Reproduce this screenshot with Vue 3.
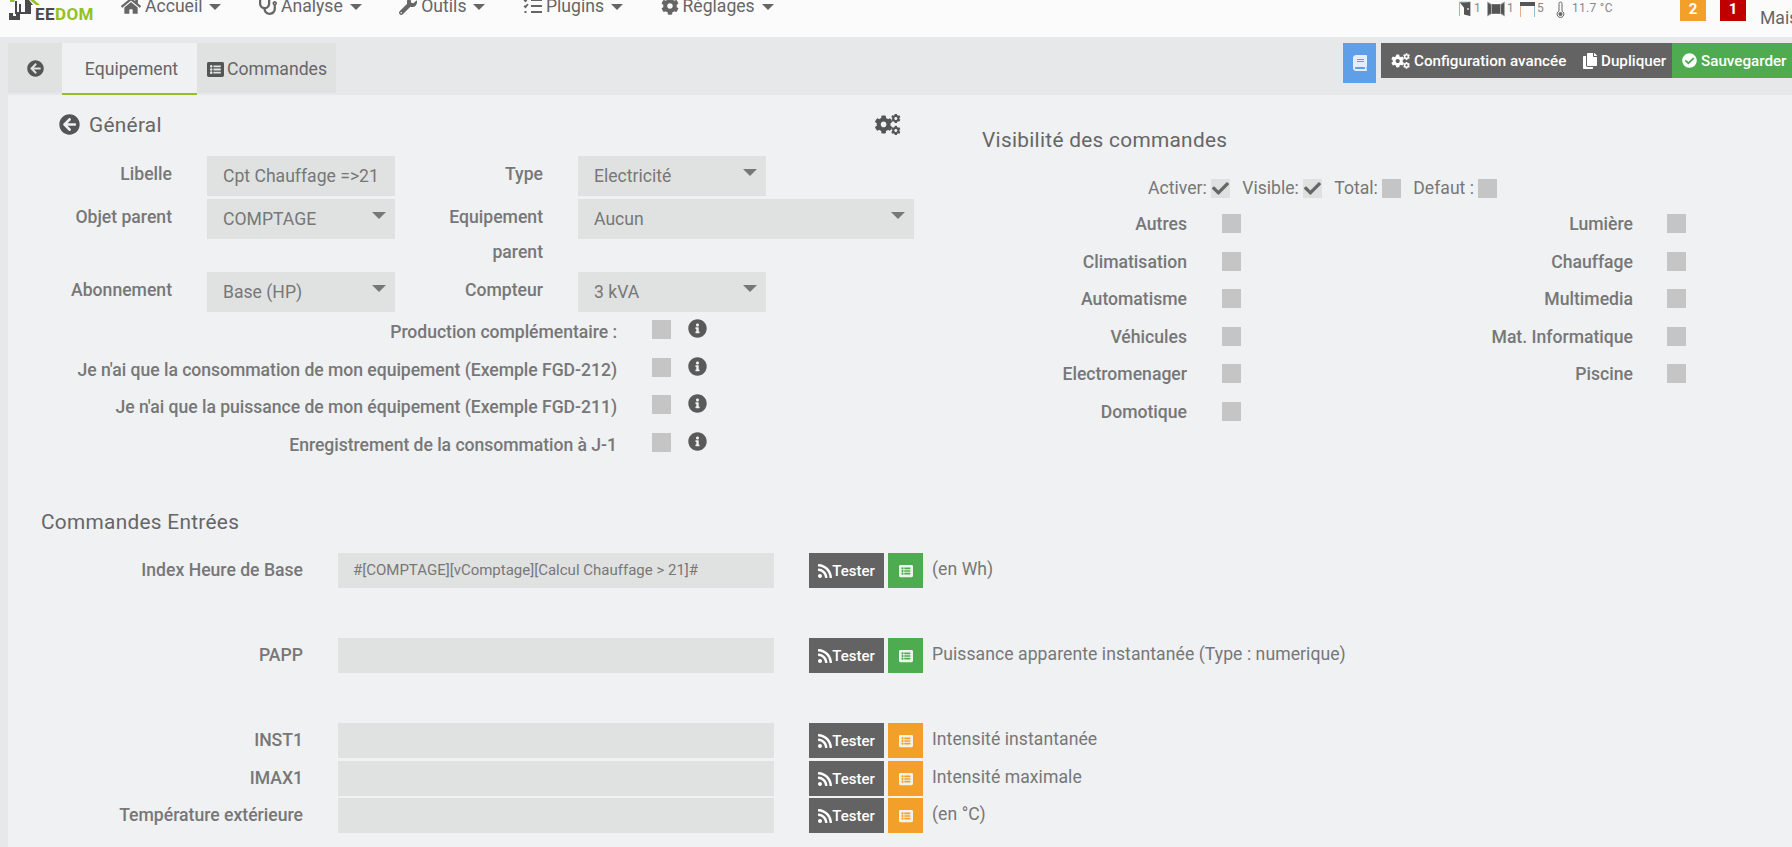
<script setup>
const p = {
  home: 'M280.37 148.26L96 300.11V464a16 16 0 0 0 16 16l112.06-.29a16 16 0 0 0 15.92-16V368a16 16 0 0 1 16-16h64a16 16 0 0 1 16 16v95.64a16 16 0 0 0 16 16.05L464 480a16 16 0 0 0 16-16V300L295.67 148.26a12.19 12.19 0 0 0-15.3 0zM571.6 251.47L488 182.56V44.05a12 12 0 0 0-12-12h-56a12 12 0 0 0-12 12v72.61L318.47 43a48 48 0 0 0-61 0L4.34 251.47a12 12 0 0 0-1.6 16.9l25.5 31A12 12 0 0 0 45.15 301l235.22-193.74a12.19 12.19 0 0 1 15.3 0L530.9 301a12 12 0 0 0 16.9-1.6l25.5-31a12 12 0 0 0-1.7-16.93z',
  steth: 'M447.1 112c-34.2.5-62.3 28.4-63 62.6-.5 24.3 12.5 45.6 32 56.8V344c0 57.3-50.2 104-112 104-60 0-109.2-44.1-111.9-99.2C265 333.8 320 269.2 320 192V36.6c0-11.4-8.1-21.3-19.3-23.5L237.8.5c-13-2.6-25.6 5.8-28.2 18.8L206.4 35c-2.6 13 5.8 25.6 18.8 28.2l30.7 6.1v121.4c0 52.9-42.2 96.7-95.1 97.2-53.4.5-96.9-42.7-96.9-96V69.4l30.7-6.1c13-2.6 21.4-15.2 18.8-28.2l-3.1-15.7C107.7 6.4 95.1-2 82.1.6L19.3 13C8.1 15.3 0 25.1 0 36.6V192c0 77.3 55.1 142 128.1 156.8C130.7 439.2 208.6 512 304 512c97 0 176-75.4 176-168V231.4c19.1-11.1 32-31.7 32-55.4 0-35.7-29.2-64.5-64.9-64zm.9 80c-8.8 0-16-7.2-16-16s7.2-16 16-16 16 7.2 16 16-7.2 16-16 16z',
  wrench: 'M507.73 109.1c-2.24-9.03-13.54-12.09-20.12-5.51l-74.36 74.36-67.88-11.31-11.31-67.88 74.36-74.36c6.62-6.62 3.43-17.9-5.66-20.16-47.38-11.74-99.55.91-136.58 37.93-39.64 39.64-50.55 97.1-34.05 147.2L18.74 402.76c-24.99 24.99-24.99 65.51 0 90.5 24.99 24.99 65.51 24.99 90.5 0l213.21-213.21c50.12 16.71 107.47 5.68 147.37-34.22 37.07-37.07 49.7-89.32 37.91-136.73zM64 472c-13.25 0-24-10.75-24-24 0-13.26 10.75-24 24-24s24 10.74 24 24c0 13.25-10.75 24-24 24z',
  cog: 'M487.4 315.7l-42.6-24.6c4.3-23.2 4.3-47 0-70.2l42.6-24.6c4.9-2.8 7.1-8.6 5.5-14-11.1-35.6-30-67.8-54.7-94.6-3.8-4.1-10-5.1-14.8-2.3L380.8 110c-17.9-15.4-38.5-27.3-60.8-35.1V25.8c0-5.6-3.9-10.5-9.4-11.7-36.7-8.2-74.3-7.8-109.2 0-5.5 1.2-9.4 6.1-9.4 11.7V75c-22.2 7.9-42.8 19.8-60.8 35.1L88.7 85.5c-4.9-2.8-11-1.9-14.8 2.3-24.7 26.7-43.6 58.9-54.7 94.6-1.7 5.4.6 11.2 5.5 14L67.3 221c-4.3 23.2-4.3 47 0 70.2l-42.6 24.6c-4.9 2.8-7.1 8.6-5.5 14 11.1 35.6 30 67.8 54.7 94.6 3.8 4.1 10 5.1 14.8 2.3l42.6-24.6c17.9 15.4 38.5 27.3 60.8 35.1v49.2c0 5.6 3.9 10.5 9.4 11.7 36.7 8.2 74.3 7.8 109.2 0 5.5-1.2 9.4-6.1 9.4-11.7v-49.2c22.2-7.9 42.8-19.8 60.8-35.1l42.6 24.6c4.9 2.8 11 1.9 14.8-2.3 24.7-26.7 43.6-58.9 54.7-94.6 1.5-5.5-.7-11.3-5.6-14.1zM256 336c-44.1 0-80-35.9-80-80s35.9-80 80-80 80 35.9 80 80-35.9 80-80 80z',
  back: 'M256 504C119 504 8 393 8 256S119 8 256 8s248 111 248 248-111 248-248 248zm28.9-143.6L209.4 288H392c13.3 0 24-10.7 24-24v-16c0-13.3-10.7-24-24-24H209.4l75.5-72.4c9.7-9.3 9.9-24.8.4-34.3l-11-10.9c-9.4-9.4-24.6-9.4-33.9 0L107.7 239c-9.4 9.4-9.4 24.6 0 33.9l132.7 132.7c9.4 9.4 24.6 9.4 33.9 0l11-10.9c9.5-9.5 9.3-25-.4-34.3z',
  ok: 'M504 256c0 136.967-111.033 248-248 248S8 392.967 8 256 119.033 8 256 8s248 111.033 248 248zM227.314 387.314l184-184c6.248-6.248 6.248-16.379 0-22.627l-22.627-22.627c-6.248-6.249-16.379-6.249-22.628 0L216 308.118l-70.059-70.059c-6.248-6.248-16.379-6.248-22.628 0l-22.627 22.627c-6.248 6.248-6.248 16.379 0 22.627l104 104c6.249 6.249 16.379 6.249 22.628.001z',
  info: 'M256 8C119.043 8 8 119.083 8 256c0 136.997 111.043 248 248 248s248-111.003 248-248C504 119.083 392.957 8 256 8zm0 110c23.196 0 42 18.804 42 42s-18.804 42-42 42-42-18.804-42-42 18.804-42 42-42zm56 254c0 6.627-5.373 12-12 12h-88c-6.627 0-12-5.373-12-12v-24c0-6.627 5.373-12 12-12h12v-64h-12c-6.627 0-12-5.373-12-12v-24c0-6.627 5.373-12 12-12h64c6.627 0 12 5.373 12 12v100h12c6.627 0 12 5.373 12 12v24z',
  check: 'M173.898 439.404l-166.4-166.4c-9.997-9.997-9.997-26.206 0-36.204l36.203-36.204c9.997-9.998 26.207-9.998 36.204 0L192 312.69 432.095 72.596c9.997-9.997 26.207-9.997 36.204 0l36.203 36.204c9.997 9.997 9.997 26.206 0 36.204l-294.4 294.401c-9.998 9.997-26.207 9.997-36.204-.001z',
  rss: 'M128.081 415.959c0 35.369-28.672 64.041-64.041 64.041S0 451.328 0 415.959s28.672-64.041 64.041-64.041 64.04 28.673 64.04 64.041zm175.66 47.25c-8.354-154.6-132.185-278.587-286.95-286.95C7.656 175.765 0 183.105 0 192.253v48.069c0 8.415 6.49 15.472 14.887 16.018 111.832 7.284 201.473 96.702 208.772 208.772.547 8.397 7.604 14.887 16.018 14.887h48.069c9.149.001 16.489-7.655 15.995-16.79zm144.249.288C439.596 229.677 251.465 40.445 16.503 32.01 7.473 31.686 0 38.981 0 48.016v48.068c0 8.625 6.835 15.645 15.453 15.999 191.179 7.839 344.627 161.316 352.465 352.465.353 8.618 7.373 15.453 15.999 15.453h48.068c9.034-.001 16.329-7.474 16.005-16.504z',
  list: 'M464 480H48c-26.51 0-48-21.49-48-48V80c0-26.51 21.49-48 48-48h416c26.51 0 48 21.49 48 48v352c0 26.51-21.49 48-48 48zM128 120c-22.091 0-40 17.909-40 40s17.909 40 40 40 40-17.909 40-40-17.909-40-40-40zm0 96c-22.091 0-40 17.909-40 40s17.909 40 40 40 40-17.909 40-40-17.909-40-40-40zm0 96c-22.091 0-40 17.909-40 40s17.909 40 40 40 40-17.909 40-40-17.909-40-40-40zm288-136v-32c0-6.627-5.373-12-12-12H204c-6.627 0-12 5.373-12 12v32c0 6.627 5.373 12 12 12h200c6.627 0 12-5.373 12-12zm0 96v-32c0-6.627-5.373-12-12-12H204c-6.627 0-12 5.373-12 12v32c0 6.627 5.373 12 12 12h200c6.627 0 12-5.373 12-12zm0 96v-32c0-6.627-5.373-12-12-12H204c-6.627 0-12 5.373-12 12v32c0 6.627 5.373 12 12 12h200c6.627 0 12-5.373 12-12z',
  book: 'M448 360V24c0-13.3-10.7-24-24-24H96C43 0 0 43 0 96v320c0 53 43 96 96 96h328c13.3 0 24-10.7 24-24v-16c0-7.5-3.5-14.3-8.9-18.7-4.2-15.4-4.2-59.3 0-74.7 5.4-4.3 8.9-11.1 8.9-18.6zM128 134c0-3.3 2.7-6 6-6h212c3.3 0 6 2.7 6 6v20c0 3.3-2.7 6-6 6H134c-3.3 0-6-2.7-6-6v-20zm0 64c0-3.3 2.7-6 6-6h212c3.3 0 6 2.7 6 6v20c0 3.3-2.7 6-6 6H134c-3.3 0-6-2.7-6-6v-20zm253.4 250H96c-17.7 0-32-14.3-32-32 0-17.6 14.4-32 32-32h285.4c-1.9 17.1-1.9 46.9 0 64z',
  copy: 'M320 448v40c0 13.255-10.745 24-24 24H24c-13.255 0-24-10.745-24-24V120c0-13.255 10.745-24 24-24h72v296c0 30.879 25.121 56 56 56h168zm0-344V0H152c-13.255 0-24 10.745-24 24v368c0 13.255 10.745 24 24 24h272c13.255 0 24-10.745 24-24V128H344c-13.2 0-24-10.8-24-24zm120.971-31.029L375.029 7.029A24 24 0 0 0 358.059 0H352v96h96v-6.059a24 24 0 0 0-7.029-16.97z'
}
const checks = [
  'Production complémentaire :',
  "Je n'ai que la consommation de mon equipement (Exemple FGD-212)",
  "Je n'ai que la puissance de mon équipement (Exemple FGD-211)",
  'Enregistrement de la consommation à J-1'
]
const cats = [
  ['Autres', 'Lumière'],
  ['Climatisation', 'Chauffage'],
  ['Automatisme', 'Multimedia'],
  ['Véhicules', 'Mat. Informatique'],
  ['Electromenager', 'Piscine'],
  ['Domotique', '']
]
const cmds = [
  { label: 'Index Heure de Base', value: '#[COMPTAGE][vComptage][Calcul Chauffage > 21]#', desc: '(en Wh)', color: 'green', cls: '' },
  { label: 'PAPP', value: '', desc: 'Puissance apparente instantanée (Type : numerique)', color: 'green', cls: 'far' },
  { label: 'INST1', value: '', desc: 'Intensité instantanée', color: 'orange', cls: 'far' },
  { label: 'IMAX1', value: '', desc: 'Intensité maximale', color: 'orange', cls: 'near' },
  { label: 'Température extérieure', value: '', desc: '(en °C)', color: 'orange', cls: 'tight' }
]
</script>

<template>
  <div class="page">
    <header class="nav">
      <div class="logo">
        <svg class="logo-mark" width="36" height="22" viewBox="0 0 36 22">
          <path d="M5 0h5l-1 2H5z" fill="#94c11f" />
          <path d="M25 0h4l6 5h-4z" fill="#94c11f" />
          <path d="M20 0h4l4 5h-2v9H15v6H4v-7h4v3h3v-2h-1V1h2v11h2V4h2v8h4V3z" fill="#4a4a4d" />
        </svg>
        <span class="logo-text"><span class="ee">EE</span><span class="dom">DOM</span></span>
      </div>
      <nav class="menu">
        <a class="item">
          <svg class="nav-ico" width="20" height="18" viewBox="0 0 576 512"><path :d="p.home" /></svg>
          Accueil<i class="caret"></i>
        </a>
        <a class="item">
          <svg class="nav-ico" width="18" height="18" viewBox="0 0 512 512"><path :d="p.steth" /></svg>
          Analyse<i class="caret"></i>
        </a>
        <a class="item">
          <svg class="nav-ico" width="18" height="18" viewBox="0 0 512 512"><path :d="p.wrench" /></svg>
          Outils<i class="caret"></i>
        </a>
        <a class="item">
          <svg class="nav-ico" width="19" height="18" viewBox="0 0 19 18" stroke="#666" stroke-width="2" fill="none">
            <path d="M8 3h11M8 9h11M8 15h11" /><path d="M1 3l1.500 1.500L5 1M1 9l1.500 1.500L5 7" stroke-width="1.400" /><path d="M1.500 15h2" />
          </svg>
          Plugins<i class="caret"></i>
        </a>
        <a class="item">
          <svg class="nav-ico" width="18" height="18" viewBox="0 0 512 512"><path :d="p.cog" /></svg>
          Réglages<i class="caret"></i>
        </a>
      </nav>
      <div class="status">
        <svg width="13" height="16" viewBox="0 0 13 16" fill="none">
          <path d="M.5 1h11v14" stroke="#bbb" /><path d="M.5 1v14" stroke="#e8a070" /><path d="M5 2.500l6-1.500v14l-6-1.500z" fill="#555" /><circle cx="9" cy="8" r="1" fill="#ddd" />
        </svg>
        <span class="n1">1</span>
        <svg class="s-win" width="18" height="16" viewBox="0 0 18 16" fill="none">
          <path d="M4.500 3.500h9v9h-9z" stroke="#777" /><path d="M.5 1l4 2.500v9l-4 2.500zM17.500 1l-4 2.500v9l4 2.500z" stroke="#aaa" />
        </svg>
        <span class="n2">1</span>
        <svg class="s-shut" width="15" height="16" viewBox="0 0 15 16" fill="none">
          <path d="M0 1h15v4H0z" fill="#555" /><path d="M.5 5v11" stroke="#e8b08a" /><path d="M14.500 5v11" stroke="#9bc" />
        </svg>
        <span class="n3">5</span>
        <svg class="s-th" width="9" height="17" viewBox="0 0 9 17" fill="none" stroke="#666">
          <path d="M3 2.500a1.500 1.500 0 0 1 3 0v7.500a3.400 3.400 0 1 1-3 0z" fill="#fbfbfb" /><circle cx="4.500" cy="13" r="1.600" fill="#666" />
        </svg>
        <span class="temp">11.7 °C</span>
      </div>
      <span class="badge orange">2</span>
      <span class="badge red">1</span>
      <span class="home-name">Maison</span>
    </header>

    <div class="tabbar">
      <a class="tab back">
        <svg width="17" height="17" viewBox="0 0 512 512"><path :d="p.back" /></svg>
      </a>
      <a class="tab active">Equipement</a>
      <a class="tab cmd">
        <svg width="17" height="17" viewBox="0 0 512 512"><path :d="p.list" /></svg>Commandes
      </a>
      <div class="actions">
        <a class="btn-doc">
          <svg width="14" height="16" viewBox="0 0 448 512"><path :d="p.book" /></svg>
        </a>
        <a class="btn dark cfg">
          <svg width="19" height="16" viewBox="0 0 640 512">
            <g transform="translate(0 30) scale(.88)"><path :d="p.cog" /></g>
            <g transform="translate(405 -10) scale(.46)"><path :d="p.cog" /></g>
            <g transform="translate(405 285) scale(.46)"><path :d="p.cog" /></g>
          </svg>
          Configuration avancée
        </a>
        <a class="btn dark dup">
          <svg width="14" height="16" viewBox="0 0 448 512"><path :d="p.copy" /></svg>
          Dupliquer
        </a>
        <a class="btn save">
          <svg width="15" height="15" viewBox="0 0 512 512"><path :d="p.ok" /></svg>
          Sauvegarder
        </a>
      </div>
    </div>

    <main class="main">
      <div class="cols">
        <section class="left">
          <div class="gen-head">
            <div class="gen-title">
              <svg width="21" height="21" viewBox="0 0 512 512"><path :d="p.back" /></svg>
              <span>Général</span>
            </div>
            <svg width="27" height="21" viewBox="0 0 640 512">
              <g transform="translate(0 30) scale(.88)"><path :d="p.cog" /></g>
              <g transform="translate(405 -10) scale(.46)"><path :d="p.cog" /></g>
              <g transform="translate(405 285) scale(.46)"><path :d="p.cog" /></g>
            </svg>
          </div>

          <div class="frow">
            <label class="l1">Libelle</label>
            <div class="field w188">Cpt Chauffage =&gt;21</div>
            <label class="l2">Type</label>
            <div class="field select w188">Electricité</div>
          </div>
          <div class="frow">
            <label class="l1">Objet parent</label>
            <div class="field select w188">COMPTAGE</div>
            <label class="l2">Equipement<br />parent</label>
            <div class="field select w336">Aucun</div>
          </div>
          <div class="frow">
            <label class="l1">Abonnement</label>
            <div class="field select w188">Base (HP)</div>
            <label class="l2">Compteur</label>
            <div class="field select w188">3 kVA</div>
          </div>

          <div class="checks">
            <div v-for="c in checks" :key="c" class="crow">
              <label>{{ c }}</label>
              <i class="box"></i>
              <svg class="info" width="19" height="19" viewBox="0 0 512 512"><path :d="p.info" /></svg>
            </div>
          </div>
        </section>

        <section class="right">
          <h3 class="vis-title">Visibilité des commandes</h3>
          <div class="vis-line">
            <span>Activer:</span><i class="box on"><svg width="17" height="17" viewBox="0 0 512 512"><path :d="p.check" /></svg></i>
            <span>Visible:</span><i class="box on"><svg width="17" height="17" viewBox="0 0 512 512"><path :d="p.check" /></svg></i>
            <span>Total:</span><i class="box"></i>
            <span>Defaut :</span><i class="box"></i>
          </div>
          <div v-for="r in cats" :key="r[0]" class="cat">
            <label class="c1">{{ r[0] }}</label><i class="box"></i>
            <template v-if="r[1]">
              <label class="c2">{{ r[1] }}</label><i class="box"></i>
            </template>
          </div>
        </section>
      </div>

      <h3 class="cmd-title">Commandes Entrées</h3>
      <div v-for="c in cmds" :key="c.label" class="cmd-row" :class="c.cls">
        <label class="cmd-label">{{ c.label }}</label>
        <div class="cmd-input">{{ c.value }}</div>
        <a class="tester">
          <svg width="14" height="16" viewBox="0 0 448 512"><path :d="p.rss" /></svg><span>Tester</span>
        </a>
        <a class="hist" :class="c.color">
          <svg width="14" height="14" viewBox="0 0 512 512"><path :d="p.list" /></svg>
        </a>
        <span class="desc">{{ c.desc }}</span>
      </div>
    </main>
  </div>
</template>

<style>
html, body { margin: 0; background: #e7e8ea; }
</style>

<style scoped>
.page {
  height: 847px;
  overflow: hidden;
  display: flex;
  flex-direction: column;
  background: #e7e8ea;
  font-family: Roboto, "Liberation Sans", sans-serif;
  font-size: 17.6px;
  color: #777;
}
svg { display: block; flex: none; fill: #555; }

.nav {
  height: 37px;
  flex: none;
  background: #fbfbfb;
  display: flex;
  align-items: flex-start;
  overflow: hidden;
  white-space: nowrap;
}
.logo { width: 121px; flex: none; display: flex; align-items: flex-start; padding-left: 5px; box-sizing: border-box; position: relative; }
.logo-text { position: absolute; left: 35px; top: 4px; font-size: 17px; font-weight: 700; letter-spacing: 0.4px; line-height: 20px; }
.ee { color: #4a4a4d; }
.dom { color: #94c11f; }
.menu { display: flex; gap: 37.5px; margin-top: -4px; color: #666; }
.item { display: flex; align-items: center; height: 20px; line-height: 20px; font-size: 17.6px; color: #666; }
.nav-ico { fill: #666; margin-right: 4px; margin-top: -1px; }
.caret { width: 0; height: 0; border-left: 6px solid transparent; border-right: 6px solid transparent; border-top: 6px solid #666; margin-left: 7px; margin-top: 2px; }

.status { position: absolute; left: 1459px; top: 1px; display: flex; align-items: flex-start; font-size: 12px; line-height: 14px; color: #888; }
.n1 { margin-left: 2px; width: 13px; }
.n2 { margin-left: 2px; width: 13px; }
.n3 { margin-left: 2px; width: 19px; }
.temp { margin-left: 7px; letter-spacing: 0.3px; }
.badge { position: absolute; top: 0; width: 26px; height: 21px; text-align: center; color: #fff; font-size: 15px; font-weight: 700; line-height: 18px; }
.badge.orange { left: 1680px; background: #f2a02a; }
.badge.red { left: 1720px; background: #c00000; }
.home-name { position: absolute; left: 1760px; top: 8px; font-size: 17.6px; line-height: 20px; color: #666; }

.tabbar { flex: none; height: 58px; padding: 6px 0 0 8px; box-sizing: border-box; display: flex; align-items: flex-start; }
.tab { height: 50px; background: #e0e2e2; display: flex; align-items: center; box-sizing: border-box; font-size: 17.6px; color: #666; padding-top: 2px; }
.tab.back { width: 54px; justify-content: center; padding-top: 0; }
.tab.active { width: 135px; justify-content: center; background: #eff1f3; border-bottom: 2px solid #94c11f; height: 52px; padding-left: 4px; }
.tab.cmd { width: 139px; justify-content: center; gap: 3px; padding-left: 1px; }
.actions { margin-left: auto; display: flex; align-items: flex-start; }
.btn-doc { width: 33px; height: 40px; background: #5f9fe8; display: flex; align-items: center; justify-content: center; margin-right: 5px; }
.btn-doc svg { fill: #e4edf9; }
.btn { height: 35px; display: flex; align-items: center; color: #fff; font-size: 15.2px; font-weight: 500; box-sizing: border-box; gap: 4px; white-space: nowrap; }
.btn svg { fill: #fff; }
.dark { background: #636363; }
.cfg { width: 191px; padding-left: 10px; }
.dup { width: 100px; padding-left: 11px; }
.save { width: 120px; background: #4fab50; padding-left: 10px; }

.main { flex: 1; margin-left: 8px; background: #eff1f3; }
.cols { display: flex; }
.left { width: 974px; flex: none; }
.gen-head { width: 893px; height: 21px; margin-top: 19px; margin-bottom: 21px; padding-left: 51px; box-sizing: border-box; display: flex; justify-content: space-between; align-items: center; }
.gen-title { display: flex; align-items: center; gap: 9px; font-size: 20.8px; letter-spacing: 0.3px; color: #666; }

.frow { display: flex; align-items: flex-start; margin-bottom: 3px; }
.frow label { line-height: 35px; font-weight: 500; color: #777; text-align: right; box-sizing: border-box; position: relative; top: 1px; }
.l1 { width: 164px; margin-right: 35px; }
.l2 { width: 148px; margin-right: 35px; }
.field { height: 40px; line-height: 40px; background: #e0e2e1; padding-left: 16px; box-sizing: border-box; position: relative; color: #777; }
.w188 { width: 188px; }
.w336 { width: 336px; }
.select::after { content: ""; position: absolute; right: 9px; top: 13px; border-left: 7.5px solid transparent; border-right: 7.5px solid transparent; border-top: 7px solid #777; }

.crow { display: flex; align-items: flex-start; height: 37.5px; }
.crow label { width: 609px; text-align: right; margin-right: 35px; line-height: 35px; font-weight: 500; letter-spacing: -0.035px; }
.box { width: 19px; height: 19px; background: #c5c5c5; flex: none; display: flex; align-items: center; justify-content: center; }
.box.on { background: #dfe1e0; }
.box.on svg { fill: #666; }
.crow .box { margin-top: 5px; }
.info { margin-left: 17px; margin-top: 4px; fill: #5a5a5a; }

.vis-title { margin: 33px 0 18px; font-size: 20.8px; line-height: 24px; font-weight: 400; letter-spacing: 0.3px; color: #666; }
.vis-line { display: flex; align-items: center; height: 36px; padding-left: 166px; }
.vis-line span { margin-right: 4px; }
.vis-line .box { margin-right: 12.5px; }
.cat { display: flex; align-items: flex-start; height: 37.5px; }
.cat label { line-height: 36px; text-align: right; font-weight: 500; }
.cat .box { margin-top: 8px; }
.c1 { width: 205px; margin-right: 35px; }
.c2 { width: 392px; margin-right: 34px; }

.cmd-title { margin: 45px 0 19px 33px; font-size: 20.8px; line-height: 24px; font-weight: 400; letter-spacing: 0.3px; color: #666; }
.cmd-row { display: flex; align-items: flex-start; height: 35px; }
.cmd-row.far { margin-top: 50px; }
.cmd-row.near { margin-top: 3px; }
.cmd-row.tight { margin-top: 2px; }
.cmd-label { width: 295px; margin-right: 35px; text-align: right; line-height: 35px; font-weight: 500; flex: none; }
.cmd-input { width: 436px; height: 35px; line-height: 35px; background: #e0e2e1; padding-left: 15px; box-sizing: border-box; font-size: 15px; flex: none; margin-right: 35px; }
.tester { width: 75px; height: 35px; background: #636363; color: #fff; font-size: 15px; font-weight: 500; display: flex; align-items: center; justify-content: center; margin-right: 4px; flex: none; }
.tester svg { fill: #fff; }
.hist { width: 35px; height: 35px; display: flex; align-items: center; justify-content: center; flex: none; margin-right: 9px; }
.hist svg { fill: #eef3ee; }
.hist.green { background: #4fab50; }
.hist.orange { background: #f2a02a; }
.desc { line-height: 32px; letter-spacing: 0.06px; }
</style>
